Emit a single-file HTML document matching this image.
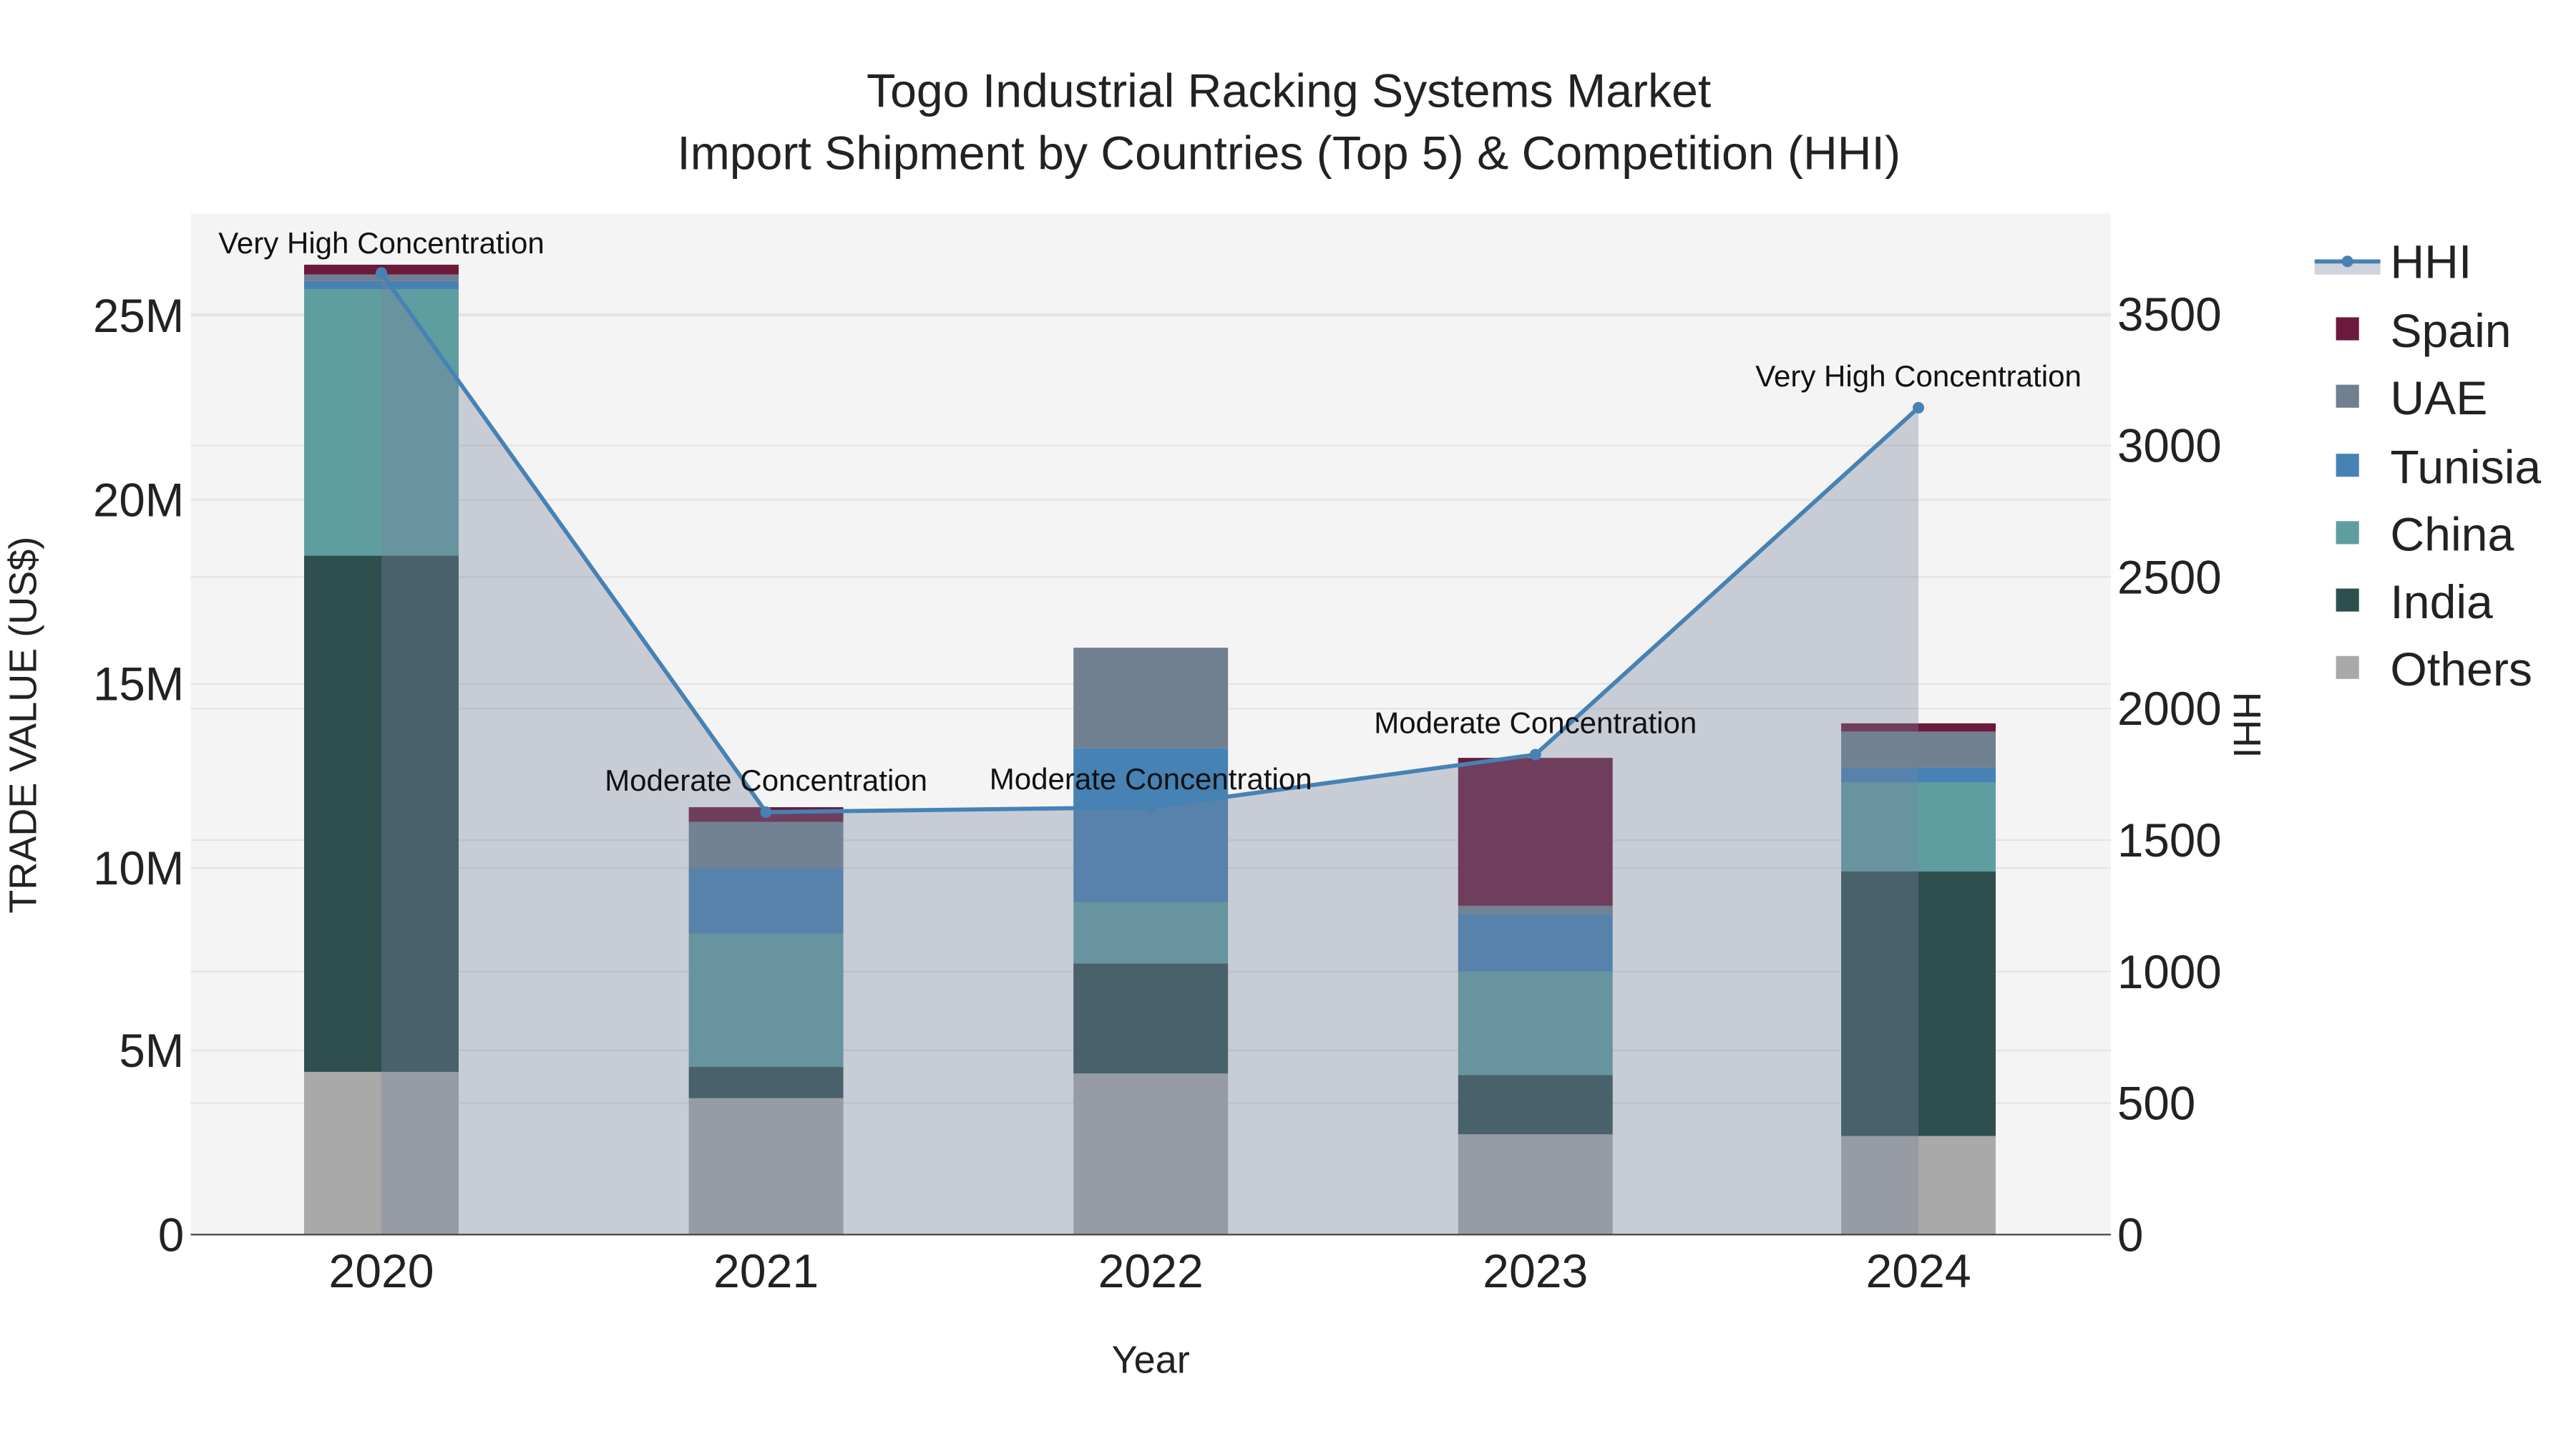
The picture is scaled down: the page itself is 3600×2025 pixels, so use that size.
<!DOCTYPE html>
<html><head><meta charset="utf-8"><style>html,body{margin:0;padding:0;background:#fff}svg{display:block}</style></head>
<body>
<svg width="3600" height="2025" viewBox="0 0 1567 881.4" xmlns="http://www.w3.org/2000/svg" font-family="'Liberation Sans', sans-serif">
<rect width="1567" height="882" fill="#fff"/>
<rect x="116" y="130" width="1168" height="621" fill="#f4f4f4"/>
<g stroke="#e4e4e4" stroke-width="1">
<line x1="116" x2="1284" y1="639" y2="639"/><line x1="116" x2="1284" y1="528" y2="528"/><line x1="116" x2="1284" y1="416" y2="416"/><line x1="116" x2="1284" y1="304" y2="304"/><line x1="116" x2="1284" y1="192" y2="192"/>
<line x1="116" x2="1284" y1="671" y2="671"/><line x1="116" x2="1284" y1="591" y2="591"/><line x1="116" x2="1284" y1="511" y2="511"/><line x1="116" x2="1284" y1="431" y2="431"/><line x1="116" x2="1284" y1="351" y2="351"/><line x1="116" x2="1284" y1="271" y2="271"/><line x1="116" x2="1284" y1="191" y2="191"/>
</g>
<g>
<rect x="185" y="652" width="94" height="99" fill="#a9a9a9"/><rect x="185" y="338" width="94" height="314" fill="#2f4f4f"/><rect x="185" y="176" width="94" height="162" fill="#5f9ea0"/><rect x="185" y="171" width="94" height="5" fill="#4682b4"/><rect x="185" y="167" width="94" height="4" fill="#708090"/><rect x="185" y="161" width="94" height="6" fill="#6b1a3c"/>
<rect x="419" y="668" width="94" height="83" fill="#a9a9a9"/><rect x="419" y="649" width="94" height="19" fill="#2f4f4f"/><rect x="419" y="568" width="94" height="81" fill="#5f9ea0"/><rect x="419" y="528" width="94" height="40" fill="#4682b4"/><rect x="419" y="500" width="94" height="28" fill="#708090"/><rect x="419" y="491" width="94" height="9" fill="#6b1a3c"/>
<rect x="653" y="653" width="94" height="98" fill="#a9a9a9"/><rect x="653" y="586" width="94" height="67" fill="#2f4f4f"/><rect x="653" y="549" width="94" height="37" fill="#5f9ea0"/><rect x="653" y="455" width="94" height="94" fill="#4682b4"/><rect x="653" y="394" width="94" height="61" fill="#708090"/>
<rect x="887" y="690" width="94" height="61" fill="#a9a9a9"/><rect x="887" y="654" width="94" height="36" fill="#2f4f4f"/><rect x="887" y="591" width="94" height="63" fill="#5f9ea0"/><rect x="887" y="556" width="94" height="35" fill="#4682b4"/><rect x="887" y="551" width="94" height="5" fill="#708090"/><rect x="887" y="461" width="94" height="90" fill="#6b1a3c"/>
<rect x="1120" y="691" width="94" height="60" fill="#a9a9a9"/><rect x="1120" y="530" width="94" height="161" fill="#2f4f4f"/><rect x="1120" y="476" width="94" height="54" fill="#5f9ea0"/><rect x="1120" y="467" width="94" height="9" fill="#4682b4"/><rect x="1120" y="445" width="94" height="22" fill="#708090"/><rect x="1120" y="440" width="94" height="5" fill="#6b1a3c"/>
</g>
<polygon points="232,751 232,166 466,494 700,491 934,459 1167,248 1167,751" fill="rgb(118,129,155)" fill-opacity="0.354"/>
<polyline points="232,166 466,494 700,491 934,459 1167,248" fill="none" stroke="#4682b4" stroke-width="2.5"/>
<g fill="#4682b4"><circle cx="232" cy="166" r="3.5"/><circle cx="466" cy="494" r="3.5"/><circle cx="700" cy="491" r="3.5"/><circle cx="934" cy="459" r="3.5"/><circle cx="1167" cy="248" r="3.5"/></g>
<line x1="116" x2="1284" y1="751" y2="751" stroke="#444" stroke-width="1"/>
<g font-size="18.3" fill="#111" text-anchor="middle">
<text x="232" y="154">Very High Concentration</text>
<text x="466" y="481">Moderate Concentration</text>
<text x="700" y="480">Moderate Concentration</text>
<text x="934" y="446">Moderate Concentration</text>
<text x="1167" y="235">Very High Concentration</text>
</g>
<g font-size="28.8" fill="#222" text-anchor="middle">
<text x="784" y="65">Togo Industrial Racking Systems Market</text>
<text x="784" y="103">Import Shipment by Countries (Top 5) &amp; Competition (HHI)</text>
</g>
<g font-size="28.5" fill="#222" text-anchor="end">
<text x="112" y="761">0</text><text x="112" y="649">5M</text><text x="112" y="538">10M</text><text x="112" y="426">15M</text><text x="112" y="314">20M</text><text x="112" y="202">25M</text>
</g>
<g font-size="28.5" fill="#222">
<text x="1288" y="761">0</text><text x="1288" y="681">500</text><text x="1288" y="601">1000</text><text x="1288" y="521">1500</text><text x="1288" y="441">2000</text><text x="1288" y="361">2500</text><text x="1288" y="281">3000</text><text x="1288" y="201">3500</text>
</g>
<g font-size="28.8" fill="#222" text-anchor="middle">
<text x="232" y="783">2020</text><text x="466" y="783">2021</text><text x="700" y="783">2022</text><text x="934" y="783">2023</text><text x="1167" y="783">2024</text>
</g>
<text x="700" y="835" font-size="23.5" fill="#222" text-anchor="middle">Year</text>
<text transform="translate(22,441) rotate(-90)" font-size="23.5" fill="#222" text-anchor="middle">TRADE VALUE (US$)</text>
<text transform="translate(1359,441) rotate(90)" font-size="23.5" fill="#222" text-anchor="middle">HHI</text>
<g>
<rect x="1408" y="159" width="40" height="8" fill="rgb(118,129,155)" fill-opacity="0.354"/>
<line x1="1408" x2="1448" y1="159" y2="159" stroke="#4682b4" stroke-width="2.5"/><circle cx="1428" cy="159" r="3.5" fill="#4682b4"/>
<rect x="1421" y="193" width="14" height="14" fill="#6b1a3c"/>
<rect x="1421" y="234" width="14" height="14" fill="#708090"/>
<rect x="1421" y="276" width="14" height="14" fill="#4682b4"/>
<rect x="1421" y="317" width="14" height="14" fill="#5f9ea0"/>
<rect x="1421" y="358" width="14" height="14" fill="#2f4f4f"/>
<rect x="1421" y="399" width="14" height="14" fill="#a9a9a9"/>
</g>
<g font-size="28.8" fill="#222">
<text x="1454" y="169">HHI</text><text x="1454" y="211">Spain</text><text x="1454" y="252">UAE</text><text x="1454" y="294">Tunisia</text><text x="1454" y="335">China</text><text x="1454" y="376">India</text><text x="1454" y="417">Others</text>
</g>
</svg>
</body></html>
